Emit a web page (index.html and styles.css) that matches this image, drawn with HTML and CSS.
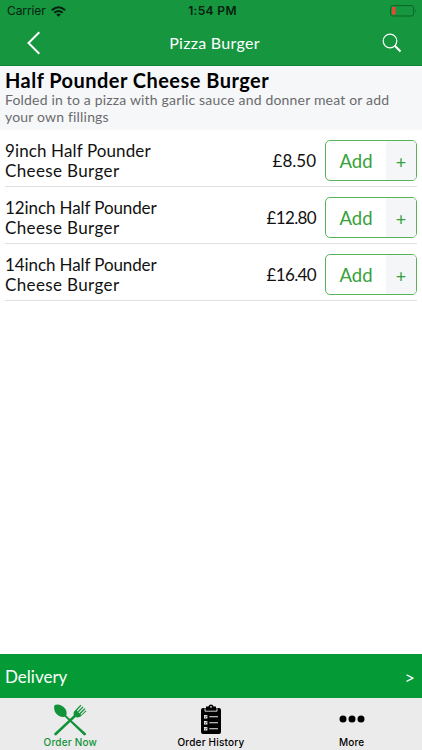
FILE: index.html
```html
<!DOCTYPE html>
<html lang="en">
<head>
<meta charset="utf-8">
<title>Pizza Burger</title>
<link rel="stylesheet" href="styles.css">
</head>
<body>
<header class="header">
  <div class="status">
    <div class="carrier"><span>Carrier</span>
      <svg width="15" height="11" viewBox="0 0 15 11" fill="none" stroke="#07210f" stroke-width="2"><path d="M.8 4.2Q7.5-1.8 14.2 4.2M3.3 6.8q4.2-3.6 8.4 0"/><path d="M5.2 8.4q2.3-1.8 4.6 0L7.5 10.8z" fill="#07210f" stroke="none"/></svg>
    </div>
    <span class="time">1:54 PM</span>
    <svg class="battery" width="27" height="12" viewBox="0 0 27 12"><rect x=".6" y=".6" width="23" height="10.4" rx="2" fill="none" stroke="#0c6427"/><rect x="2" y="2" width="3.6" height="7.6" fill="#e14b32"/><path d="M25 4q1.5 1.8 0 3.6z" fill="#0c6427"/></svg>
  </div>
  <nav class="nav">
    <svg width="14" height="24" viewBox="0 0 14 24" fill="none" stroke="#fff" stroke-width="2"><path d="M12.3 1.2 1.5 12l10.8 10.8"/></svg>
    <h1 class="title">Pizza Burger</h1>
    <svg width="20" height="20" viewBox="0 0 20 20" fill="none" stroke="#fff"><circle cx="8" cy="8" r="6.8" stroke-width="1.2"/><path d="m12.8 12.8 5.7 5.7" stroke-width="2"/></svg>
  </nav>
</header>
<section class="intro">
  <h2 class="name">Half Pounder Cheese Burger</h2>
  <p class="desc">Folded in to a pizza with garlic sauce and donner meat or add<br>your own fillings</p>
</section>
<main class="list">
  <div class="row"><div class="item"><span class="size">9inch Half Pounder</span><span>Cheese Burger</span></div><span class="price">£8.50</span><button class="add"><span class="label">Add</span><span class="plus">+</span></button></div>
  <div class="row"><div class="item"><span class="size wide">12inch Half Pounder</span><span>Cheese Burger</span></div><span class="price long">£12.80</span><button class="add"><span class="label">Add</span><span class="plus">+</span></button></div>
  <div class="row"><div class="item"><span class="size wide">14inch Half Pounder</span><span>Cheese Burger</span></div><span class="price long">£16.40</span><button class="add"><span class="label">Add</span><span class="plus">+</span></button></div>
</main>
<div class="delivery"><span>Delivery</span><span class="more">&gt;</span></div>
<footer class="tabs">
  <div class="tab active">
    <svg width="34" height="34" viewBox="0 0 34 34" fill="#119339"><path d="M1.5 2.2C4 .2 10 2 12.6 6.2c1.3 2.4 1.3 4.6.6 6.2L33 30.5q.3 2-1.8 2L11.8 13.7C8 15 1.9 11.5 1.3 6.5Q.8 3.5 1.5 2.2z"/><path d="M1.2 30.6 20.8 12.2c-.9-2.6.5-4.1 2-5.5L27.5 1.8l.9.8-4.6 5.2.8.8 5-5.2.9.8-5 5.2.8.8 5.2-5 .9.9-5 5.2.8.8L32.6 7.4l.8.9-5 4.5c-1.8 1.6-3.6 2.2-5.8 1.3L3 32.6Q.8 32.7 1.2 30.6z"/></svg>
    <span>Order Now</span>
  </div>
  <div class="tab">
    <svg width="22" height="34" viewBox="0 0 22 34"><path d="M3 5h3V3.5h2.4a2.7 2.7 0 0 1 5.2 0H16V5h3q2 0 2 2v22q0 2-2 2H3q-2 0-2-2V7q0-2 2-2z"/><path d="M5 5.3v2.9h12V5.3" fill="none" stroke="#ebebeb" stroke-width=".9"/><circle cx="11" cy="3.8" r=".9" fill="#ebebeb"/><g fill="#ebebeb"><path d="M4 12h3.4v3.4H4zM4 18h3.4v3.4H4zM4 24h3.4v3.4H4zM9.3 13.2H18v1H9.3zM9.3 19.2H18v1H9.3zM9.3 25.2H18v1H9.3z"/></g><path d="m4.7 13.5.8.8 1.4-1.7M4.7 19.5l.8.8 1.4-1.7M4.7 25.5l.8.8 1.4-1.7" fill="none" stroke="#000" stroke-width=".7"/></svg>
    <span>Order History</span>
  </div>
  <div class="tab">
    <svg width="26" height="34" viewBox="0 0 26 34"><circle cx="4" cy="16" r="3.5"/><circle cx="13" cy="16" r="3.5"/><circle cx="22" cy="16" r="3.5"/></svg>
    <span>More</span>
  </div>
</footer>
</body>
</html>
```
FILE: styles.css
```css
* { box-sizing: border-box; }
body {
  margin: 0;
  height: 750px;
  display: flex;
  flex-direction: column;
  background: #fff;
  color: #111;
  font-family: Lato, sans-serif;
  overflow: hidden;
}
svg { display: block; flex: none; }
h1, h2, p { margin: 0; }
.header { height: 66px; background: #15963f; border-bottom: 1px solid #108335; }
.status {
  height: 22px;
  padding: 0 5px 0 7px;
  display: grid;
  grid-template-columns: 1fr auto 1fr;
  align-items: center;
  font: 12px/22px Inter, sans-serif;
  color: #07210f;
}
.carrier { display: flex; align-items: center; gap: 5px; letter-spacing: -.1px; }
.time { font-weight: 600; letter-spacing: .35px; padding-left: 1px; }
.battery { justify-self: end; }
.nav {
  height: 42px;
  padding: 0 20px 0 27px;
  display: grid;
  grid-template-columns: 1fr auto 1fr;
  align-items: center;
  color: #fff;
}
.nav > :last-child { justify-self: end; }
.title { padding-bottom: 2px; font-size: 16px; font-weight: 400; letter-spacing: .3px; }
.intro { height: 64px; padding: 3px 5px 0; background: #f6f7f9; }
.name { font-size: 20px; line-height: 23px; font-weight: 700; color: #000; white-space: nowrap; letter-spacing: .46px; }
.desc { font-size: 14px; line-height: 17px; margin-top: -1px; color: #6b6b6d; white-space: nowrap; letter-spacing: .18px; }
.list { flex: 1; padding: 0 5px; }
.row { height: 57px; display: flex; align-items: center; border-bottom: 1px solid #e0e0e0; padding-top: 5px; }
.item { flex: 1; display: flex; flex-direction: column; font-size: 17px; line-height: 20px; letter-spacing: .37px; }
.size { letter-spacing: .12px; }
.wide { letter-spacing: -.1px; }
.price { font-size: 17px; margin-right: 9px; }
.long { letter-spacing: -.65px; }
.add {
  width: 92px;
  height: 41px;
  padding: 0;
  display: flex;
  border: 1px solid #55b45a;
  border-radius: 5px;
  background: #fff;
  color: #36a13a;
  font-family: inherit;
  overflow: hidden;
}
.label, .plus { height: 39px; display: flex; align-items: center; justify-content: center; }
.label { width: 60px; font-size: 18.5px; }
.plus { width: 30px; padding-top: 2px; font-size: 18px; background: #f5f6f8; }
.delivery {
  height: 44px;
  padding: 0 7px 0 5px;
  display: flex;
  align-items: center;
  justify-content: space-between;
  background: #049b36;
  color: #fff;
  font-size: 17px;
}
.more { padding-top: 2px; font-size: 18px; }
.tabs { height: 52px; padding-top: 5px; display: grid; grid-template-columns: repeat(3, 1fr); background: #ebebeb; }
.tab { display: flex; flex-direction: column; align-items: center; font: 500 10px/11px Inter, sans-serif; color: #000; letter-spacing: .2px; }
.active { color: #119339; }
```
